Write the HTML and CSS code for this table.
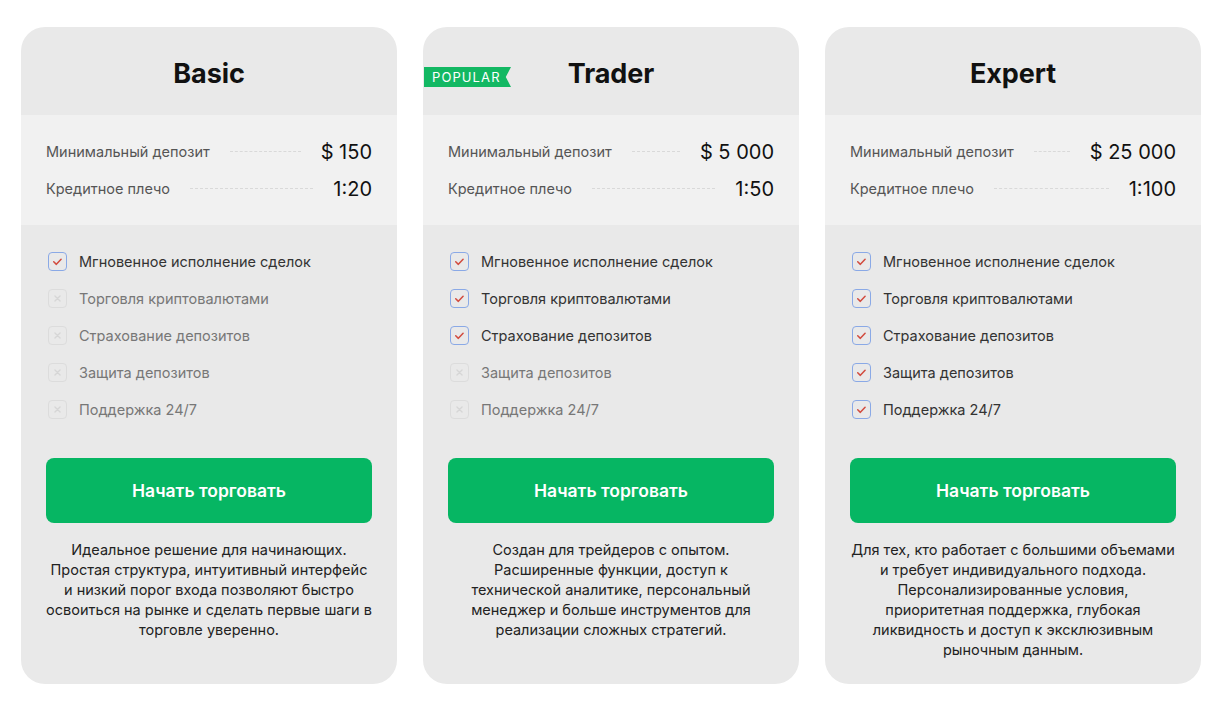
FILE: index.html
```html
<!DOCTYPE html>
<html lang="ru">
<head>
<meta charset="utf-8">
<title>Тарифы</title>
<link rel="stylesheet" href="styles.css">
</head>
<body>
<div class="plans">
  <div class="card">
    <div class="head"><h2 class="title">Basic</h2></div>
    <div class="stats">
      <div class="row"><span class="label">Минимальный депозит</span><span class="leader"></span><span class="value">$ 150</span></div>
      <div class="row"><span class="label">Кредитное плечо</span><span class="leader"></span><span class="value">1:20</span></div>
    </div>
    <div class="body">
      <ul class="features">
        <li class="on"><span class="box"><svg viewBox="0 0 18 18"><path d="M5 9.3 L7.8 12 L12.8 6.6"/></svg></span>Мгновенное исполнение сделок</li>
        <li class="off"><span class="box"><svg viewBox="0 0 18 18"><path d="M6.3 6.3 L11.7 11.7 M11.7 6.3 L6.3 11.7"/></svg></span>Торговля криптовалютами</li>
        <li class="off"><span class="box"><svg viewBox="0 0 18 18"><path d="M6.3 6.3 L11.7 11.7 M11.7 6.3 L6.3 11.7"/></svg></span>Страхование депозитов</li>
        <li class="off"><span class="box"><svg viewBox="0 0 18 18"><path d="M6.3 6.3 L11.7 11.7 M11.7 6.3 L6.3 11.7"/></svg></span>Защита депозитов</li>
        <li class="off"><span class="box"><svg viewBox="0 0 18 18"><path d="M6.3 6.3 L11.7 11.7 M11.7 6.3 L6.3 11.7"/></svg></span>Поддержка 24/7</li>
      </ul>
      <button class="btn">Начать торговать</button>
      <p class="desc">Идеальное решение для начинающих. Простая структура, интуитивный интерфейс и низкий порог входа позволяют быстро освоиться на рынке и сделать первые шаги в торговле уверенно.</p>
    </div>
  </div>

  <div class="card">
    <div class="head"><span class="badge">POPULAR</span><h2 class="title">Trader</h2></div>
    <div class="stats">
      <div class="row"><span class="label">Минимальный депозит</span><span class="leader"></span><span class="value">$ 5 000</span></div>
      <div class="row"><span class="label">Кредитное плечо</span><span class="leader"></span><span class="value">1:50</span></div>
    </div>
    <div class="body">
      <ul class="features">
        <li class="on"><span class="box"><svg viewBox="0 0 18 18"><path d="M5 9.3 L7.8 12 L12.8 6.6"/></svg></span>Мгновенное исполнение сделок</li>
        <li class="on"><span class="box"><svg viewBox="0 0 18 18"><path d="M5 9.3 L7.8 12 L12.8 6.6"/></svg></span>Торговля криптовалютами</li>
        <li class="on"><span class="box"><svg viewBox="0 0 18 18"><path d="M5 9.3 L7.8 12 L12.8 6.6"/></svg></span>Страхование депозитов</li>
        <li class="off"><span class="box"><svg viewBox="0 0 18 18"><path d="M6.3 6.3 L11.7 11.7 M11.7 6.3 L6.3 11.7"/></svg></span>Защита депозитов</li>
        <li class="off"><span class="box"><svg viewBox="0 0 18 18"><path d="M6.3 6.3 L11.7 11.7 M11.7 6.3 L6.3 11.7"/></svg></span>Поддержка 24/7</li>
      </ul>
      <button class="btn">Начать торговать</button>
      <p class="desc">Создан для трейдеров с опытом. Расширенные функции, доступ к технической аналитике, персональный менеджер и больше инструментов для реализации сложных стратегий.</p>
    </div>
  </div>

  <div class="card">
    <div class="head"><h2 class="title">Expert</h2></div>
    <div class="stats">
      <div class="row"><span class="label">Минимальный депозит</span><span class="leader"></span><span class="value">$ 25 000</span></div>
      <div class="row"><span class="label">Кредитное плечо</span><span class="leader"></span><span class="value">1:100</span></div>
    </div>
    <div class="body">
      <ul class="features">
        <li class="on"><span class="box"><svg viewBox="0 0 18 18"><path d="M5 9.3 L7.8 12 L12.8 6.6"/></svg></span>Мгновенное исполнение сделок</li>
        <li class="on"><span class="box"><svg viewBox="0 0 18 18"><path d="M5 9.3 L7.8 12 L12.8 6.6"/></svg></span>Торговля криптовалютами</li>
        <li class="on"><span class="box"><svg viewBox="0 0 18 18"><path d="M5 9.3 L7.8 12 L12.8 6.6"/></svg></span>Страхование депозитов</li>
        <li class="on"><span class="box"><svg viewBox="0 0 18 18"><path d="M5 9.3 L7.8 12 L12.8 6.6"/></svg></span>Защита депозитов</li>
        <li class="on"><span class="box"><svg viewBox="0 0 18 18"><path d="M5 9.3 L7.8 12 L12.8 6.6"/></svg></span>Поддержка 24/7</li>
      </ul>
      <button class="btn">Начать торговать</button>
      <p class="desc">Для тех, кто работает с большими объемами и требует индивидуального подхода. Персонализированные условия, приоритетная поддержка, глубокая ликвидность и доступ к эксклюзивным рыночным данным.</p>
    </div>
  </div>
</div>
</body>
</html>
```

FILE: styles.css
```css
* { box-sizing: border-box; }
html, body { margin: 0; background: #ffffff; }
body {
  font-family: "Inter", "Noto Sans", sans-serif;
  color: #222;
}
.plans {
  display: flex;
  align-items: flex-start;
  gap: 26px;
  padding: 27px 0 0 21px;
}
.card {
  width: 376px;
  height: 657px;
  background: #e9e9e9;
  border-radius: 24px;
  overflow: hidden;
  display: flex;
  flex-direction: column;
}
.head {
  position: relative;
  height: 88px;
  padding-top: 5px;
  display: flex;
  align-items: center;
  justify-content: center;
}
.title {
  margin: 0;
  font-size: 27px;
  font-weight: 700;
  color: #111;
  letter-spacing: -0.1px;
}
.badge {
  position: absolute;
  left: 1px;
  top: 40px;
  height: 20px;
  width: 87px;
  padding-left: 8px;
  background: #13b863;
  color: #fff;
  font-size: 13px;
  letter-spacing: 1.1px;
  line-height: 20px;
  clip-path: polygon(0 0, 100% 0, 94% 50%, 100% 100%, 0 100%);
}
.stats {
  background: #f1f1f1;
  height: 110px;
  padding: 18px 25px 0 25px;
}
.row {
  display: flex;
  align-items: center;
  height: 37px;
}
.label {
  font-size: 14.5px;
  color: #555;
}
.leader {
  flex: 1;
  margin: 0 20px;
  border-top: 1px dashed #d9d9d9;
}
.value {
  font-size: 20px;
  color: #111;
}
.body {
  padding: 18px 25px 0 25px;
  display: flex;
  flex-direction: column;
}
.features {
  list-style: none;
  margin: 0;
  padding: 0 0 0 2px;
}
.features li {
  display: flex;
  align-items: center;
  height: 37px;
  font-size: 14.5px;
}
.features li.on { color: #333; }
.features li.off { color: #777; }
.box {
  width: 19px;
  height: 19px;
  border-radius: 4px;
  margin-right: 12px;
  flex: none;
  display: flex;
}
.box svg { width: 17px; height: 17px; fill: none; stroke-linecap: round; stroke-linejoin: round; }
.on .box { border: 1px solid #8aa9e6; }
.on .box svg { stroke: #d24c3f; stroke-width: 1.6; }
.off .box { border: 1px solid #dcdcdc; }
.off .box svg { stroke: #d6d6d6; stroke-width: 1.4; }
.btn {
  margin-top: 30px;
  height: 65px;
  width: 100%;
  border: none;
  border-radius: 8px;
  background: #06b663;
  color: #fff;
  font-family: inherit;
  font-size: 17.5px;
  font-weight: 600;
}
.desc {
  margin: 17px 0 0;
  text-align: center;
  font-size: 14.5px;
  line-height: 20px;
  color: #222;
}
```
